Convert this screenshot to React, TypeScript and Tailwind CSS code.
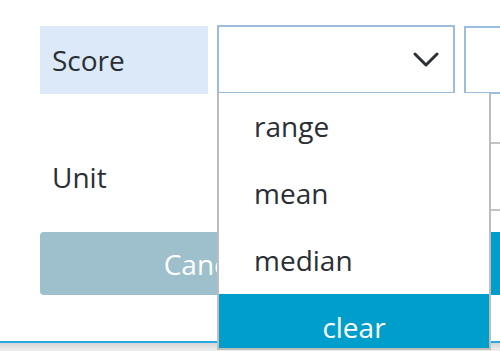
import React from "react";

const options = ["range", "mean", "median"];

function Chevron() {
	return (
		<svg width="26" height="16" viewBox="0 0 26 16" fill="none">
			<path d="M2 2 L13 13 L24 2" stroke="#2b3036" strokeWidth="3" strokeLinecap="round" strokeLinejoin="round" />
		</svg>
	);
}

export default function App() {
	return (
		<div
			className="relative w-[500px] h-[351px] overflow-hidden bg-white text-[#2b2f34]"
			style={{ fontFamily: '"Open Sans", "Noto Sans", sans-serif' }}
		>
			<div className="flex flex-col pl-[40px] pt-[25px]">
				{/* row 1 */}
				<div className="flex items-start">
					<div className="shrink-0 mt-[1px] flex items-center w-[168px] h-[68px] bg-[#dce9f8] pl-[12px] text-[28px]">
						Score
					</div>
					<div className="shrink-0 ml-[9px] flex items-center justify-end w-[238px] h-[69px] border-2 border-[#9abde0] pr-[14px]">
						<Chevron />
					</div>
					<div className="shrink-0 ml-[9px] w-[60px] h-[68px] mt-[1px] border-2 border-[#9abde0]" />
				</div>
				{/* row 2 */}
				<div className="flex h-[138px]">
					<div className="shrink-0 flex flex-col w-[420px]">
						<div className="flex items-center h-[138px] pl-[12px] pt-[28px] text-[28px]">Unit</div>
					</div>
					<div className="shrink-0 flex flex-col w-[60px] pt-[48px]">
						<div className="h-[67px] border-t-2 border-[#c4c4c4]" />
						<div className="h-[23px] border-t-2 border-[#c4c4c4]" />
					</div>
				</div>
				{/* row 3 */}
				<div className="flex gap-[10px]">
					<button className="shrink-0 flex items-center justify-center w-[334px] h-[63px] rounded-[4px] bg-[#9ebfcc] text-white text-[28px]">
						Cancel
					</button>
					<button className="shrink-0 flex items-center justify-center w-[160px] h-[63px] rounded-[4px] bg-[#009ecb] text-white text-[28px]">
						OK
					</button>
				</div>
			</div>
			{/* bottom edge */}
			<div className="absolute left-0 right-0 top-[341px] h-[2px] bg-[#2aa8e0]" />
			<div className="absolute left-0 right-0 top-[343px] h-[8px] bg-gradient-to-b from-[#d6d6d6] to-[#efefef]" />
			{/* dropdown list */}
			<div className="absolute left-[217px] top-[93px] w-[274px] h-[257px] flex flex-col bg-white border-x-2 border-b-2 border-[#bdbdbd]">
				{options.map((o) => (
					<div key={o} className="flex items-center h-[67px] pl-[35px] text-[28px]">
						{o}
					</div>
				))}
				<div className="flex items-center justify-center flex-1 mt-[1px] bg-[#009ecb] text-white text-[28px] pt-[12px]">
					clear
				</div>
			</div>
		</div>
	);
}
